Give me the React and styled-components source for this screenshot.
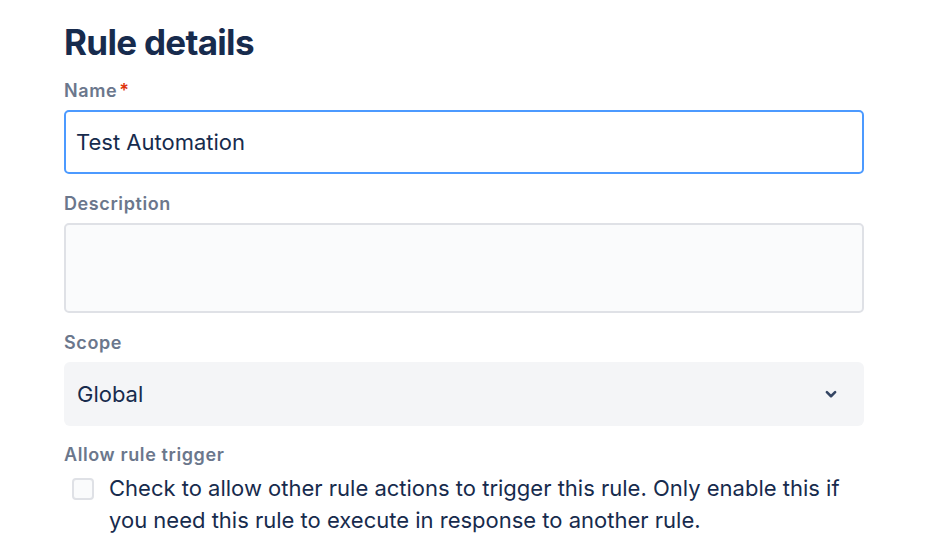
import React from "react";
import styled, { createGlobalStyle } from "styled-components";

const GlobalStyle = createGlobalStyle`
  body {
    margin: 0;
    background: #ffffff;
    font-family: Inter, "Noto Sans", sans-serif;
    color: #172b4d;
  }
`;

const Page = styled.div`
  box-sizing: border-box;
  width: 928px;
  height: 560px;
  overflow: hidden;
  padding: 20px 64px 0 64px;
`;

const Form = styled.form`
  width: 800px;
  display: flex;
  flex-direction: column;
`;

const Heading = styled.h1`
  margin: 0;
  font-size: 35px;
  line-height: 44px;
  font-weight: 700;
  letter-spacing: -0.02em;
  color: #172b4d;
`;

const Field = styled.div`
  display: flex;
  flex-direction: column;
  margin-top: ${(props) => props.marginTop ?? "19px"};
`;

const Label = styled.label`
  font-size: 18px;
  line-height: 22px;
  font-weight: 600;
  letter-spacing: 0.6px;
  color: #6b778c;
  margin-bottom: ${(props) => props.marginBottom ?? "8px"};
`;

const Required = styled.span`
  color: #de350b;
  margin-left: 2px;
`;

const TextInput = styled.input`
  box-sizing: border-box;
  width: 100%;
  height: 64px;
  padding: 0 10px;
  border: 2px solid ${(props) => (props.focused ? "#4c9aff" : "#dfe1e6")};
  border-radius: 5px;
  background: ${(props) => (props.focused ? "#ffffff" : "#fafbfc")};
  font-family: inherit;
  font-size: 22px;
  color: #172b4d;
  outline: none;
`;

const TextArea = styled.textarea`
  box-sizing: border-box;
  width: 100%;
  height: 90px;
  padding: 12px;
  border: 2px solid #dfe1e6;
  border-radius: 5px;
  background: #fafbfc;
  font-family: inherit;
  font-size: 22px;
  resize: none;
  outline: none;
`;

const Select = styled.div`
  box-sizing: border-box;
  height: 64px;
  padding: 0 24px 0 13px;
  border-radius: 6px;
  background: #f4f5f7;
  display: flex;
  align-items: center;
  justify-content: space-between;
  font-size: 22px;
  color: #172b4d;
`;

const CheckRow = styled.label`
  display: flex;
  align-items: flex-start;
  gap: 15px;
  padding-left: 8px;
`;

const Box = styled.span`
  box-sizing: border-box;
  flex: none;
  width: 22px;
  height: 22px;
  margin-top: 6px;
  border: 2px solid #dfe1e6;
  border-radius: 4px;
  background: #fafbfc;
`;

const CheckText = styled.span`
  font-size: 22px;
  line-height: 32px;
  color: #172b4d;
  max-width: 750px;
`;

function Chevron() {
  return (
    <svg width="18" height="18" viewBox="0 0 24 24" fill="none">
      <path
        d="M6.5 9.5l5.5 5.5 5.5-5.5"
        stroke="#344563"
        strokeWidth="3.4"
        strokeLinecap="round"
        strokeLinejoin="round"
      />
    </svg>
  );
}

export default function App() {
  return (
    <Page>
      <GlobalStyle />
      <Form>
        <Heading>Rule details</Heading>
        <Field marginTop="16px">
          <Label>
            Name<Required>*</Required>
          </Label>
          <TextInput focused defaultValue="Test Automation" />
        </Field>
        <Field>
          <Label>Description</Label>
          <TextArea />
        </Field>
        <Field>
          <Label>Scope</Label>
          <Select>
            Global
            <Chevron />
          </Select>
        </Field>
        <Field marginTop="18px">
          <Label marginBottom="6px">Allow rule trigger</Label>
          <CheckRow>
            <Box />
            <CheckText>
              Check to allow other rule actions to trigger this rule. Only
              enable this if you need this rule to execute in response to
              another rule.
            </CheckText>
          </CheckRow>
        </Field>
      </Form>
    </Page>
  );
}
